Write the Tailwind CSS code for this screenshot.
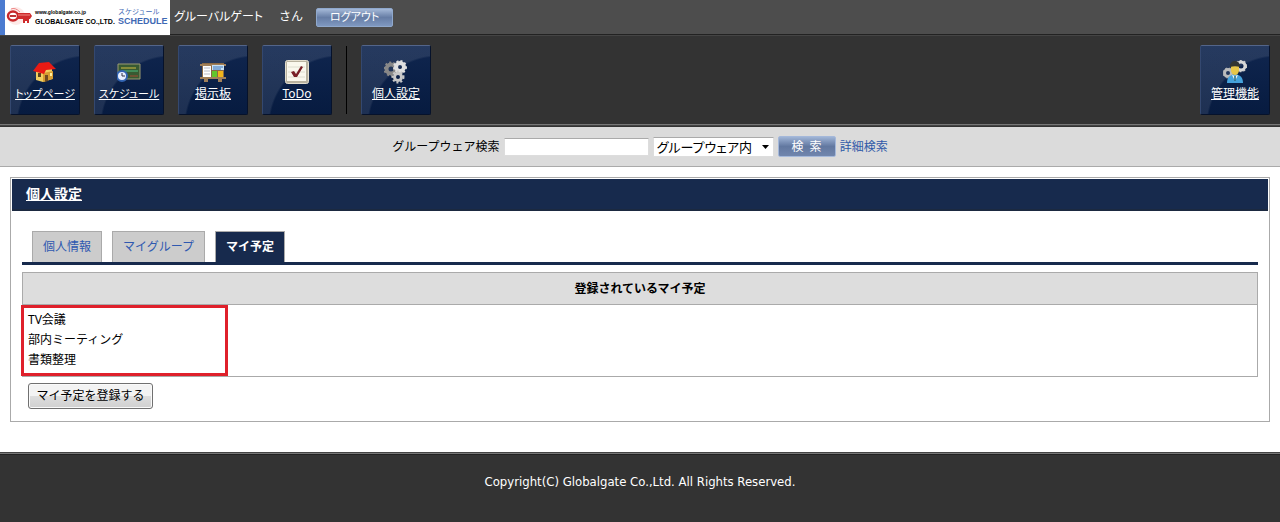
<!DOCTYPE html>
<html lang="ja">
<head>
<meta charset="utf-8">
<meta name="viewport" content="width=device-width, initial-scale=1">
<title>個人設定</title>
<script src="https://cdn.jsdelivr.net/npm/@tailwindcss/browser@4"></script>
</head>
<body class="flex min-h-screen flex-col bg-white font-['Noto_Sans','Noto_Sans_CJK_JP',sans-serif] text-xs text-black">
<header class="bg-[#333]">
  <div class="flex h-[35px] items-center border-b border-[#222] bg-[#4d4d4d]">
    <a href="#" class="flex h-[35px] w-[170px] items-center border-l-5 border-[#4b7bd0] bg-white" aria-label="GLOBALGATE SCHEDULE">
      <svg class="ml-px h-[22px] w-7 shrink-0" viewBox="0 0 28 22" fill="none">
        <circle cx="10" cy="10" r="9" fill="#fdeae8"/>
        <path d="M5 3Q9 1 14 6" stroke="#e88" stroke-width="1"/>
        <ellipse cx="7" cy="10" rx="5" ry="4.500" fill="#fff" stroke="#c8282b" stroke-width="2.500"/>
        <path d="M12 7h12l2 3-2 3h-1v4h-2v-2h-2v2h-2v-4h-5z" fill="#cf2b2c"/>
        <path d="M12 9h12" stroke="#ef8b83"/>
        <path d="M4 10h6" stroke="#b33" stroke-width="2"/>
      </svg>
      <span class="ml-px flex w-[83px] shrink-0 flex-col whitespace-nowrap font-['Liberation_Sans',sans-serif] font-bold text-black">
        <span class="text-[5px] leading-[8px]">www.globalgate.co.jp</span>
        <span class="text-[7px] leading-[11px]">GLOBALGATE CO.,LTD.</span>
      </span>
      <span class="flex flex-col whitespace-nowrap font-['Liberation_Sans','Noto_Sans_CJK_JP',sans-serif] text-[#3f69b4]">
        <span class="text-[7px] leading-[8px]">スケジュール</span>
        <span class="text-[9px] leading-[11px] font-bold">SCHEDULE</span>
      </span>
    </a>
    <p class="ml-1 flex gap-4 text-white"><span class="[font-feature-settings:'palt']">グルーバルゲート</span><span>さん</span></p>
    <button type="button" class="ml-[13px] flex h-[19px] w-[77px] items-center justify-center rounded-xs border border-[#8fa8cc] bg-linear-to-b from-[#a5b9d8] via-[#667da5] to-[#7f98c0] text-[11px] text-white [font-feature-settings:'palt']">ログアウト</button>
  </div>
  <nav class="flex h-[89px] items-center gap-[14px] border-t border-[#444] px-[10px]">
    <a href="#" class="relative flex h-[70px] w-[70px] flex-col items-center overflow-hidden rounded-xs border border-[#06122b] border-t-[#53658a] border-l-[#34486f] bg-linear-to-b from-[#10264f] to-[#071b40] pt-[14px] text-white">
      <span class="absolute inset-0 bg-[radial-gradient(circle_at_76px_80px,transparent_69px,#ffffff18_71px)]"></span>
      <svg class="relative size-6" viewBox="0 0 24 24"><path d="M3 11v9l7 2 9-3V8z" fill="#f3cf60"/><path d="M10 13v9l10-3v-8z" fill="#d69d32"/><path d="m0 11 6-8 10-1 7 7-10 1-2 4z" fill="#e91a14"/><path d="M5 13h3v4H5z" fill="#5b431d"/><path d="M12 15h3v6l-3 1z" fill="#704b20"/><path d="M17 13h2v3h-2z" fill="#fff0a0"/></svg>
      <span class="relative whitespace-nowrap text-[11px] leading-5 underline [font-feature-settings:'palt']">トップページ</span>
    </a>
    <a href="#" class="relative flex h-[70px] w-[70px] flex-col items-center overflow-hidden rounded-xs border border-[#06122b] border-t-[#53658a] border-l-[#34486f] bg-linear-to-b from-[#10264f] to-[#071b40] pt-[14px] text-white">
      <span class="absolute inset-0 bg-[radial-gradient(circle_at_76px_80px,transparent_69px,#ffffff18_71px)]"></span>
      <svg class="relative size-6" viewBox="0 0 24 24" fill="none"><path d="M1 4h22v15H1z" fill="#385a32" stroke="#9a9a73"/><path d="M4 8h15" stroke="#d2bd42"/><path d="M5 11h16" stroke="#4bbd80"/><path d="M13 16h8" stroke="#a34934"/><circle cx="5" cy="16" r="5" fill="#e7f0ff" stroke="#3264b2" stroke-width="2"/><path d="M5 13v3h3" stroke="#334"/></svg>
      <span class="relative whitespace-nowrap text-[11px] leading-5 underline [font-feature-settings:'palt']">スケジュール</span>
    </a>
    <a href="#" class="relative flex h-[70px] w-[70px] flex-col items-center overflow-hidden rounded-xs border border-[#06122b] border-t-[#53658a] border-l-[#34486f] bg-linear-to-b from-[#10264f] to-[#071b40] pt-[14px] text-white">
      <span class="absolute inset-0 bg-[radial-gradient(circle_at_76px_80px,transparent_69px,#ffffff18_71px)]"></span>
      <svg class="relative h-6 w-[26px]" viewBox="0 0 26 24"><path d="M2 3h22v14H2z" fill="#8a6a45"/><path d="M0 4h26v2H0zM0 17h26v2H0zM4 19h4v3H4zm14 0h4v3h-4z" fill="#a18059"/><path d="M3 6h8v11H3z" fill="#fff"/><path d="M12 5h12v5H12z" fill="#c9e1f3"/><path d="M13 7h10M13 9h8" stroke="#3b75b9"/><path d="M12 11h5v6h-5z" fill="#62c62b"/><path d="M18 11h5v6h-5z" fill="#f0b51c"/><path d="M4 8h6M4 11h6M4 14h6" stroke="#b9bdca"/></svg>
      <span class="relative whitespace-nowrap leading-5 underline">掲示板</span>
    </a>
    <a href="#" class="relative flex h-[70px] w-[70px] flex-col items-center overflow-hidden rounded-xs border border-[#06122b] border-t-[#53658a] border-l-[#34486f] bg-linear-to-b from-[#10264f] to-[#071b40] pt-[14px] text-white">
      <span class="absolute inset-0 bg-[radial-gradient(circle_at_76px_80px,transparent_69px,#ffffff18_71px)]"></span>
      <svg class="relative size-6" viewBox="0 0 24 24" fill="none"><rect x=".5" y=".5" width="23" height="23" rx="2" fill="#b9b3a0" stroke="#e4dfcf"/><path d="M2 2h19v19H2z" fill="#faf8ed"/><path d="M3 7h17M3 12h17M3 17h17" stroke="#deded0"/><path d="m6 12 3-1 2 3 5-8 2 1-6 10H9z" fill="#792027"/></svg>
      <span class="relative whitespace-nowrap leading-5 underline">ToDo</span>
    </a>
    <span class="h-[68px] w-px bg-black"></span>
    <a href="#" class="relative flex h-[70px] w-[70px] flex-col items-center overflow-hidden rounded-xs border border-[#06122b] border-t-[#53658a] border-l-[#34486f] bg-linear-to-b from-[#10264f] to-[#071b40] pt-[14px] text-white">
      <span class="absolute inset-0 bg-[radial-gradient(circle_at_76px_80px,transparent_69px,#ffffff18_71px)]"></span>
      <svg class="relative size-6" viewBox="0 0 24 24" fill="none"><g stroke="#888"><circle cx="7" cy="9" r="4.500" stroke-width="4"/><circle cx="7" cy="9" r="6.500" stroke-width="2" stroke-dasharray="2 2"/></g><g stroke="#e0e0e0"><circle cx="16" cy="7" r="4" stroke-width="4"/><circle cx="16" cy="7" r="6" stroke-width="2" stroke-dasharray="2 2"/></g><g stroke="#c8c8c8"><circle cx="14" cy="17" r="3.500" stroke-width="3"/><circle cx="14" cy="17" r="5.500" stroke-width="2" stroke-dasharray="2 2"/></g></svg>
      <span class="relative whitespace-nowrap leading-5 underline">個人設定</span>
    </a>
    <a href="#" class="relative ml-auto flex h-[70px] w-[70px] flex-col items-center overflow-hidden rounded-xs border border-[#06122b] border-t-[#53658a] border-l-[#34486f] bg-linear-to-b from-[#10264f] to-[#071b40] pt-[14px] text-white">
      <span class="absolute inset-0 bg-[radial-gradient(circle_at_76px_80px,transparent_69px,#ffffff18_71px)]"></span>
      <svg class="relative size-6" viewBox="0 0 24 24" fill="none"><circle cx="18" cy="6" r="4" stroke="#d8d8d8" stroke-width="3"/><circle cx="18" cy="6" r="5.500" stroke="#ccc" stroke-width="1.500" stroke-dasharray="2 2"/><circle cx="5" cy="13" r="3.500" stroke="#bbb" stroke-width="3"/><circle cx="5" cy="13" r="5" stroke="#bbb" stroke-dasharray="2 2"/><path d="M4 23c0-5 2-8 8-9 6 1 8 4 8 9z" fill="#45a2dc"/><path d="M8 6h8v5c-1 3-2 4-4 4s-3-1-4-4z" fill="#e8c648"/><path d="M7 7c0-4 2-6 5-6s5 2 5 6c-3-1-7-1-10 0z" fill="#323532"/><path d="m9 15 3 6 3-6-3 1z" fill="#eff7fc"/><path d="M12 16v5" stroke="#267" stroke-width="1.500"/></svg>
      <span class="relative whitespace-nowrap leading-5 underline">管理機能</span>
    </a>
  </nav>
  <div class="h-[3px] border-t border-b border-t-[#777] border-b-[#333] bg-[#444]"></div>
</header>

<form class="flex h-10 items-center justify-center gap-1 border-b border-[#aaa] bg-[#dbdbdb]">
  <label for="keyword">グループウェア検索</label>
  <input id="keyword" type="text" class="h-[18px] w-[145px] border border-[#ddd] border-t-[#aaa] bg-white px-1">
  <span class="relative flex">
    <select aria-label="検索範囲" class="h-5 w-[121px] appearance-none border border-[#ddd] border-t-[#aaa] bg-white pl-[3px] text-[13px] leading-[18px] [font-feature-settings:'palt']"><option>グループウェア内</option></select>
    <svg class="pointer-events-none absolute top-2 right-[5px] h-1 w-[7px]" viewBox="0 0 7 4"><path d="M0 0h7L3.500 4z"/></svg>
  </span>
  <button type="submit" class="flex h-[21px] w-[58px] items-center justify-center rounded-xs border border-[#a4b8da] bg-linear-to-b from-[#9fb4d6] via-[#6278a0] to-[#7186ad] text-xs text-white">検&ensp;索</button>
  <a href="#" class="text-[#2f59a8]">詳細検索</a>
</form>

<main class="mx-[10px] mt-[10px] mb-[30px] border border-[#aaa] p-px">
  <h1 class="flex h-8 items-center border-b-2 border-[#1b2940] bg-[#172a4d] px-[14px] text-sm font-bold text-white"><a href="#" class="underline">個人設定</a></h1>
  <div class="px-[10px] pt-5 pb-[11px]">
    <div class="flex gap-[10px] border-b-3 border-[#172a4d] px-[10px]">
      <a href="#" class="border border-b-0 border-[#aaa] bg-[#ccc] px-[10px] py-[5px] leading-5 text-[#2f59b0]">個人情報</a>
      <a href="#" class="border border-b-0 border-[#aaa] bg-[#ccc] px-[10px] py-[5px] leading-5 text-[#2f59b0]">マイグループ</a>
      <a href="#" aria-current="page" class="border border-b-0 border-[#aaa] bg-[#172a4d] px-[10px] py-[5px] leading-5 font-bold text-white">マイ予定</a>
    </div>
    <table class="mt-[7px] w-full border-collapse">
      <thead><tr><th class="h-8 border border-[#aaa] bg-[#ddd] font-bold">登録されているマイ予定</th></tr></thead>
      <tbody><tr><td class="relative h-[72px] border border-[#aaa] px-[5px] py-[5px] align-top">
        <ul class="leading-5"><li>TV会議</li><li>部内ミーティング</li><li>書類整理</li></ul>
        <span class="pointer-events-none absolute top-0 bottom-0 -left-[2px] w-[207px] border-3 border-[#df202b]"></span>
      </td></tr></tbody>
    </table>
    <button type="button" class="mt-[6px] ml-[6px] h-[26px] w-[125px] rounded-[3px] border border-[#707070] bg-linear-to-b from-[#f3f3f3] from-50% via-[#dedede] via-50% to-[#d0d0d0] text-xs whitespace-nowrap shadow-[inset_0_0_0_1px_#fafafa]">マイ予定を登録する</button>
  </div>
</main>

<footer class="flex grow flex-col border-t border-[#444] bg-[#333]">
  <div class="h-[2px] border-t border-b border-t-[#777] border-b-[#222]"></div>
  <p class="pt-[17px] text-center font-['DejaVu_Sans_Condensed','DejaVu_Sans',sans-serif] text-[13px] leading-5 text-white">Copyright(C) Globalgate Co.,Ltd. All Rights Reserved.</p>
</footer>
</body>
</html>
